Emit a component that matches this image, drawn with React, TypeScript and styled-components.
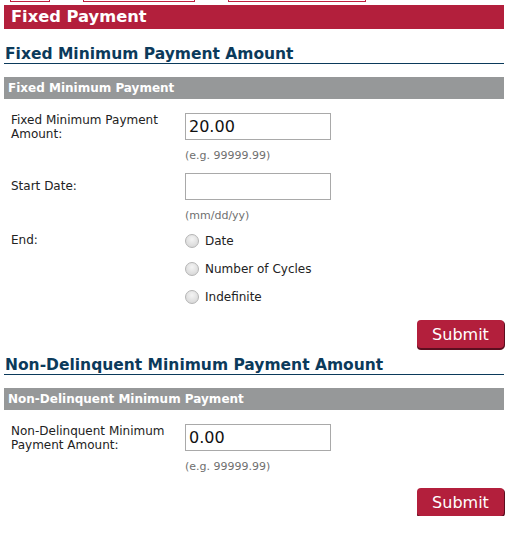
import React from "react";
import styled, { createGlobalStyle } from "styled-components";

const GlobalStyle = createGlobalStyle`
  body {
    margin: 0;
    background: #fff;
    font-family: "DejaVu Sans", Verdana, sans-serif;
    color: #222;
  }
`;

const Page = styled.div`
  width: 500px;
  margin-left: 4px;
`;

const TabStrip = styled.div`
  display: flex;
  height: 2px;
  overflow: hidden;
  padding-left: 6px;
`;

const Tab = styled.div<{ $w: number; $gap: number }>`
  width: ${({ $w }) => $w}px;
  margin-right: ${({ $gap }) => $gap}px;
  height: 2px;
  border: 1px solid #c0203f;
  border-top: none;
  box-sizing: border-box;
`;

const TitleBar = styled.div`
  margin-top: 3px;
  height: 24px;
  background: #b31f3c;
  color: #fff;
  font-weight: bold;
  font-size: 16.3px;
  line-height: 24px;
  padding-left: 7px;
`;

const SectionHeading = styled.h2<{ $top: number }>`
  margin: ${({ $top }) => $top}px 0 0;
  padding: 2px 0 0 1px;
  font-size: 15.5px;
  font-weight: bold;
  color: #0b3a5b;
  line-height: 17px;
  border-bottom: 1px solid #0b3a5b;
`;

const SubBar = styled.div`
  margin-top: 13px;
  height: 22px;
  background: #969899;
  color: #fff;
  font-weight: bold;
  font-size: 12px;
  line-height: 22px;
  padding-left: 4px;
`;

const Form = styled.div`
  display: grid;
  grid-template-columns: 174px 1fr;
  padding: 14px 0 0 7px;
  align-items: start;
`;

const Label = styled.div<{ $pad: number }>`
  font-size: 12px;
  line-height: 14px;
  color: #222;
  padding-top: ${({ $pad }) => $pad}px;
  padding-right: 20px;
`;

const Field = styled.div`
  display: flex;
  flex-direction: column;
  margin-bottom: 11px;
`;

const TextInput = styled.input`
  width: 146px;
  height: 27px;
  box-sizing: border-box;
  border: 1px solid #a9a9a9;
  font-family: "DejaVu Sans", Verdana, sans-serif;
  font-size: 16px;
  color: #111;
  padding: 0 3px;
  outline: none;
`;

const Hint = styled.div`
  margin-top: 9px;
  font-size: 11px;
  color: #6f6f6f;
`;

const RadioList = styled.div`
  display: flex;
  flex-direction: column;
  gap: 9px;
  margin-top: -2px;
`;

const RadioRow = styled.label`
  display: flex;
  align-items: center;
  gap: 6px;
  font-size: 12px;
  height: 19px;
  color: #222;
`;

const RadioDot = styled.span`
  width: 14px;
  height: 14px;
  border-radius: 50%;
  box-sizing: border-box;
  border: 1px solid #b5b5b5;
  background: radial-gradient(circle at 50% 35%, #f4f4f4 0%, #dcdcdc 70%, #cfcfcf 100%);
`;

const Actions = styled.div<{ $top: number }>`
  display: flex;
  justify-content: flex-end;
  margin-top: ${({ $top }) => $top}px;
`;

const SubmitButton = styled.button`
  width: 87px;
  height: 28px;
  border: none;
  border-radius: 4px;
  background: #b31f3c;
  box-shadow: 0 2px 0 #5c0e1f, 1px 1px 0 #5c0e1f;
  color: #fff;
  font-family: "DejaVu Sans", Verdana, sans-serif;
  font-size: 16px;
  padding: 0;
  cursor: pointer;
`;

const App = () => {
  return (
    <Page>
      <GlobalStyle />
      <TabStrip>
        <Tab $w={40} $gap={33} />
        <Tab $w={112} $gap={33} />
        <Tab $w={138} $gap={0} />
      </TabStrip>
      <TitleBar>Fixed Payment</TitleBar>

      <SectionHeading $top={15}>Fixed Minimum Payment Amount</SectionHeading>
      <SubBar>Fixed Minimum Payment</SubBar>
      <Form>
        <Label $pad={0}>Fixed Minimum Payment Amount:</Label>
        <Field>
          <TextInput defaultValue="20.00" />
          <Hint>(e.g. 99999.99)</Hint>
        </Field>
        <Label $pad={6}>Start Date:</Label>
        <Field>
          <TextInput defaultValue="" />
          <Hint>(mm/dd/yy)</Hint>
        </Field>
        <Label $pad={0}>End:</Label>
        <RadioList>
          {["Date", "Number of Cycles", "Indefinite"].map((opt) => (
            <RadioRow key={opt}>
              <RadioDot />
              {opt}
            </RadioRow>
          ))}
        </RadioList>
      </Form>
      <Actions $top={14}>
        <SubmitButton>Submit</SubmitButton>
      </Actions>

      <SectionHeading $top={7}>Non-Delinquent Minimum Payment Amount</SectionHeading>
      <SubBar>Non-Delinquent Minimum Payment</SubBar>
      <Form>
        <Label $pad={0}>Non-Delinquent Minimum Payment Amount:</Label>
        <Field>
          <TextInput defaultValue="0.00" />
          <Hint>(e.g. 99999.99)</Hint>
        </Field>
      </Form>
      <Actions $top={4}>
        <SubmitButton>Submit</SubmitButton>
      </Actions>
    </Page>
  );
};

export default App;
